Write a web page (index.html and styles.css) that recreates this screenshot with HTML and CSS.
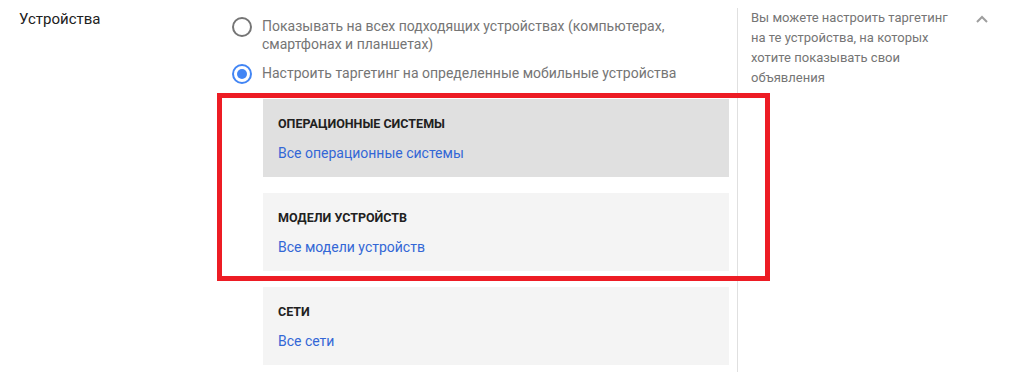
FILE: index.html
```html
<!DOCTYPE html>
<html lang="ru">
<head>
  <meta charset="UTF-8">
  <meta name="viewport" content="width=device-width, initial-scale=1.0">
  <title>Устройства</title>
  <link rel="stylesheet" href="styles.css">
</head>
<body>
  <div class="section">
    <div class="label">Устройства</div>
    <div class="main">
      <label class="option">
        <span class="radio"></span>
        <span class="option-text">Показывать на всех подходящих устройствах (компьютерах, смартфонах и планшетах)</span>
      </label>
      <label class="option">
        <span class="radio checked"></span>
        <span class="option-text">Настроить таргетинг на определенные мобильные устройства</span>
      </label>
      <div class="cards">
        <div class="highlight"></div>
        <div class="card active">
          <div class="card-title">Операционные системы</div>
          <a class="card-link" href="#">Все операционные системы</a>
        </div>
        <div class="card">
          <div class="card-title">Модели устройств</div>
          <a class="card-link" href="#">Все модели устройств</a>
        </div>
        <div class="card">
          <div class="card-title">Сети</div>
          <a class="card-link" href="#">Все сети</a>
        </div>
      </div>
    </div>
    <div class="help">
      <div class="help-text">Вы можете настроить таргетинг на те устройства, на которых хотите показывать свои объявления</div>
      <svg class="toggle" width="12" height="8" viewBox="0 0 12 8">
        <polyline points="1,7 6,2 11,7" fill="none" stroke="#9e9e9e" stroke-width="2"/>
      </svg>
    </div>
  </div>
</body>
</html>
```

FILE: styles.css
```css
body {
  font-family: Roboto, 'Noto Sans', sans-serif;
  margin: 0;
  padding: 0;
  background-color: #ffffff;
}
.section {
  display: flex;
  padding: 8px 0 11px 19px;
}
.label {
  width: 213px;
  font-size: 15px;
  line-height: 20px;
  padding-top: 1px;
  color: #212121;
}
.main {
  width: 497px;
  padding: 9px 0 7px;
}
.option {
  display: flex;
  align-items: flex-start;
  margin-bottom: 11px;
  cursor: pointer;
}
.radio {
  box-sizing: border-box;
  flex: none;
  width: 20px;
  height: 20px;
  border: 2px solid #757575;
  border-radius: 50%;
  margin-right: 10px;
  position: relative;
}
.radio.checked {
  border-color: #4285f4;
}
.radio.checked::after {
  content: "";
  position: absolute;
  left: 3px;
  top: 3px;
  width: 10px;
  height: 10px;
  border-radius: 50%;
  background-color: #4285f4;
}
.option-text {
  font-size: 14px;
  line-height: 18px;
  color: #757575;
}
.cards {
  position: relative;
  margin: 15px 0 0 31px;
  display: flex;
  flex-direction: column;
  gap: 16px;
}
.card {
  box-sizing: border-box;
  height: 78px;
  background-color: #f4f4f4;
  padding: 16px 15px 0;
  display: flex;
  flex-direction: column;
}
.card.active {
  background-color: #e0e0e0;
}
.card-title {
  font-size: 12.5px;
  font-weight: bold;
  line-height: 18px;
  text-transform: uppercase;
  color: #212121;
  margin-bottom: 10px;
}
.card-link {
  font-size: 14px;
  line-height: 20px;
  color: #3367d6;
  text-decoration: none;
}
.highlight {
  position: absolute;
  left: -46px;
  top: -6px;
  width: 553px;
  height: 188px;
  box-sizing: border-box;
  border: 5px solid #ed1c24;
  pointer-events: none;
}
.help {
  display: flex;
  align-items: flex-start;
  margin-left: 8px;
  padding-left: 13px;
  border-left: 1px solid #e0e0e0;
}
.help-text {
  width: 203px;
  font-size: 13px;
  line-height: 20px;
  color: #757575;
}
.toggle {
  margin: 7px 0 0 22px;
}
```
